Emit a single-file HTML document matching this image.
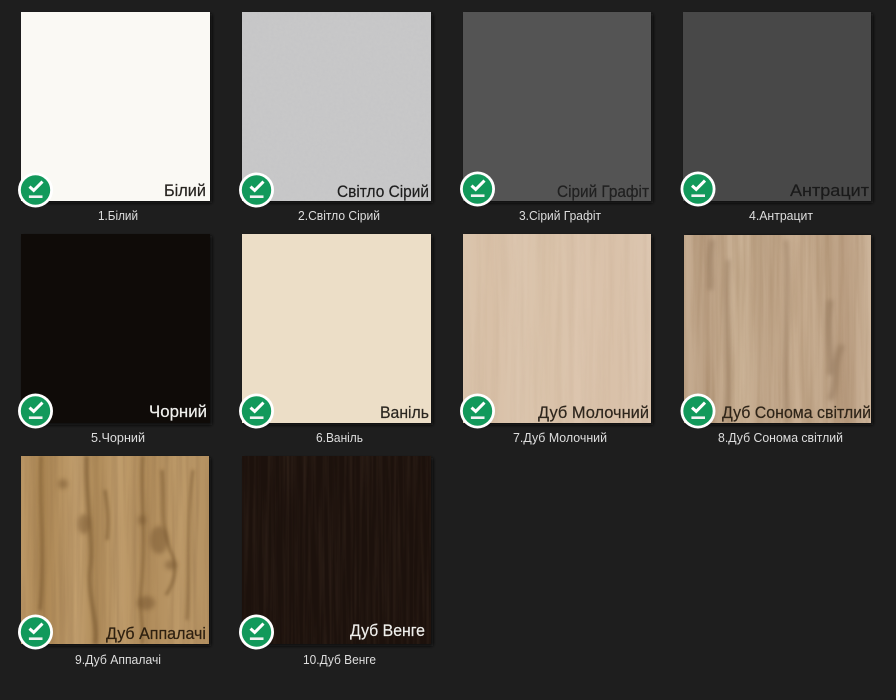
<!DOCTYPE html>
<html lang="uk">
<head>
<meta charset="utf-8">
<title>Кольори</title>
<style>
html,body{margin:0;padding:0;background:#1e1e1e;width:896px;height:700px;overflow:hidden}
svg{display:block}
text{font-family:"Liberation Sans","DejaVu Sans",sans-serif}
.c{font-size:12.5px;fill:#dedede}
.l{font-size:17px;stroke-width:.2px}
</style>
</head>
<body>
<svg width="896" height="700" viewBox="0 0 896 700" xmlns="http://www.w3.org/2000/svg">
<defs>
  <filter id="fine" x="0" y="0" width="100%" height="100%">
    <feTurbulence type="fractalNoise" baseFrequency="0.35" numOctaves="2" seed="3"/>
    <feColorMatrix values="0 0 0 0 0.5  0 0 0 0 0.5  0 0 0 0 0.5  0.5 0 0 0 -0.12"/>
  </filter>
  <filter id="grain" x="0" y="0" width="100%" height="100%">
    <feTurbulence type="fractalNoise" baseFrequency="0.16 0.006" numOctaves="3" seed="8"/>
    <feColorMatrix values="0 0 0 0 0.25  0 0 0 0 0.14  0 0 0 0 0.06  1.5 0 0 0 -0.55"/>
  </filter>
  <filter id="grainD" x="0" y="0" width="100%" height="100%">
    <feTurbulence type="fractalNoise" baseFrequency="0.3 0.008" numOctaves="2" seed="5"/>
    <feColorMatrix values="0 0 0 0 0.36  0 0 0 0 0.22  0 0 0 0 0.13  1.6 0 0 0 -0.62"/>
  </filter>
  <filter id="b1"><feGaussianBlur stdDeviation="1.6"/></filter>
  <filter id="b3"><feGaussianBlur stdDeviation="2.5"/></filter>
  <filter id="sh" x="-10%" y="-10%" width="120%" height="120%"><feGaussianBlur stdDeviation="1.5"/></filter>

  <linearGradient id="g7">
    <stop offset="0" stop-color="#dbc5ad"/><stop offset=".15" stop-color="#d8c0a7"/>
    <stop offset=".3" stop-color="#dcc6af"/><stop offset=".45" stop-color="#d9c2a9"/>
    <stop offset=".62" stop-color="#dcc5ae"/><stop offset=".8" stop-color="#d9c1a9"/>
    <stop offset="1" stop-color="#dcc6b0"/>
  </linearGradient>
  <linearGradient id="g8">
    <stop offset="0" stop-color="#c7ae93"/><stop offset=".12" stop-color="#bba084"/>
    <stop offset=".3" stop-color="#ccb498"/><stop offset=".42" stop-color="#c0a68a"/>
    <stop offset=".6" stop-color="#c8ae92"/><stop offset=".76" stop-color="#c3a98d"/>
    <stop offset=".86" stop-color="#bb9f83"/><stop offset="1" stop-color="#cdb59b"/>
  </linearGradient>
  <linearGradient id="g9">
    <stop offset="0" stop-color="#bd9967"/><stop offset=".12" stop-color="#ab8653"/>
    <stop offset=".3" stop-color="#c29f6e"/><stop offset=".4" stop-color="#ae8a58"/>
    <stop offset=".52" stop-color="#c09d6c"/><stop offset=".68" stop-color="#b08c5b"/>
    <stop offset=".85" stop-color="#bd9a69"/><stop offset="1" stop-color="#b49161"/>
  </linearGradient>

  <clipPath id="c8"><rect x="684" y="235" width="187" height="188"/></clipPath>
  <clipPath id="c9"><rect x="21" y="456" width="188" height="188"/></clipPath>

  <g id="badge">
    <circle r="17.5" fill="#fff"/>
    <circle r="14.7" fill="#12995b"/>
    <path d="M-6-3.4-1.8.4 7-8.4" fill="none" stroke="#fff" stroke-width="3"/>
    <rect x="-6.6" y="5.4" width="13.6" height="2.6" fill="#f2f2f2"/>
  </g>
</defs>

<rect width="896" height="700" fill="#1e1e1e"/>

<!-- soft shadows -->
<g fill="#111" filter="url(#sh)">
  <rect x="23" y="14" width="189" height="189"/><rect x="244" y="14" width="189" height="189"/>
  <rect x="465" y="14" width="188" height="189"/><rect x="685" y="14" width="188" height="189"/>
  <rect x="23" y="236" width="189" height="189"/><rect x="244" y="236" width="189" height="189"/>
  <rect x="465" y="236" width="188" height="189"/><rect x="686" y="236" width="187" height="189"/>
  <rect x="23" y="458" width="188" height="188"/><rect x="244" y="458" width="189" height="188"/>
</g>

<!-- row 1 -->
<rect x="21" y="12" width="189" height="189" fill="#faf9f4"/>
<rect x="242" y="12" width="189" height="189" fill="#c8c8c9"/>
<rect x="242" y="12" width="189" height="189" filter="url(#fine)" opacity=".55"/>
<rect x="463" y="12" width="188" height="189" fill="#545454"/>
<rect x="683" y="12" width="188" height="189" fill="#484848"/>

<!-- row 2 -->
<rect x="21" y="234" width="189" height="189" fill="#0f0b08"/>
<rect x="242" y="234" width="189" height="189" fill="#ecdec7"/>
<rect x="463" y="234" width="188" height="189" fill="url(#g7)"/>
<rect x="463" y="234" width="188" height="189" filter="url(#grain)" opacity=".1"/>
<rect x="684" y="235" width="187" height="188" fill="url(#g8)"/>
<rect x="684" y="235" width="187" height="188" filter="url(#grain)" opacity=".35"/>
<g clip-path="url(#c8)" fill="none" stroke="#8f7358" opacity=".55" filter="url(#b3)">
  <path d="M712 240C708 265 712 280 710 290" stroke-width="5"/>
  <path d="M830 300C826 330 832 350 830 375" stroke-width="6"/>
  <path d="M842 345C832 365 838 385 830 400" stroke-width="6"/>
  <path d="M728 260C724 320 732 370 726 420" stroke-width="4"/>
  <path d="M786 240C790 300 782 360 788 423" stroke-width="4"/>
</g>

<!-- row 3 -->
<rect x="21" y="456" width="188" height="188" fill="url(#g9)"/>
<rect x="21" y="456" width="188" height="188" filter="url(#grain)" opacity=".4"/>
<g clip-path="url(#c9)" fill="none" stroke="#6d4e28" opacity=".55" filter="url(#b1)">
  <path d="M41 456C39 500 45 560 40 610" stroke-width="3"/>
  <path d="M87 456C85 490 94 540 90 570C88 600 98 620 95 644" stroke-width="4"/>
  <path d="M105 490C108 510 109 520 107 540" stroke-width="3"/>
  <path d="M143 456C140 490 147 530 141 590C139 610 144 630 142 644" stroke-width="3"/>
  <path d="M162 470C165 510 160 520 170 550C178 565 176 580 166 595" stroke-width="3"/>
  <path d="M193 470C186 520 190 570 187 620" stroke-width="2.5"/>
</g>
<g fill="#6f4f2a" opacity=".45" filter="url(#b3)">
  <ellipse cx="84" cy="524" rx="6" ry="10"/><ellipse cx="159" cy="540" rx="9" ry="14"/>
  <ellipse cx="171" cy="565" rx="6" ry="5"/><ellipse cx="146" cy="603" rx="9" ry="7"/>
  <ellipse cx="63" cy="484" rx="5" ry="5"/><ellipse cx="142" cy="520" rx="4" ry="5"/>
</g>
<rect x="242" y="456" width="189" height="188" fill="#1c110c"/>
<rect x="242" y="456" width="189" height="188" filter="url(#grainD)" opacity=".14"/>

<!-- image labels -->
<text class="l" x="164" y="196" textLength="42" lengthAdjust="spacingAndGlyphs" fill="#26231f" stroke="#26231f">Білий</text>
<text class="l" x="337" y="197" textLength="92" lengthAdjust="spacingAndGlyphs" fill="#1d1d1d" stroke="#1d1d1d">Світло Сірий</text>
<text class="l" x="557" y="197" textLength="92" lengthAdjust="spacingAndGlyphs" fill="#202020" stroke="#202020">Сірий Графіт</text>
<text class="l" x="790" y="196" textLength="79" lengthAdjust="spacingAndGlyphs" fill="#1a1a1a" stroke="#1a1a1a">Антрацит</text>
<text class="l" x="149" y="417" textLength="58" lengthAdjust="spacingAndGlyphs" fill="#f1f1ee" stroke="#f1f1ee">Чорний</text>
<text class="l" x="380" y="418" textLength="49" lengthAdjust="spacingAndGlyphs" fill="#2a2620" stroke="#2a2620">Ваніль</text>
<text class="l" x="538" y="418" textLength="111" lengthAdjust="spacingAndGlyphs" fill="#2e261d" stroke="#2e261d">Дуб Молочний</text>
<text class="l" x="722" y="418" textLength="149" lengthAdjust="spacingAndGlyphs" fill="#2e2418" stroke="#2e2418">Дуб Сонома світлий</text>
<text class="l" x="106" y="639" textLength="100" lengthAdjust="spacingAndGlyphs" fill="#2e2010" stroke="#2e2010">Дуб Аппалачі</text>
<text class="l" x="350" y="636" textLength="75" lengthAdjust="spacingAndGlyphs" fill="#efefec" stroke="#efefec">Дуб Венге</text>

<!-- badges -->
<use href="#badge" x="35.5" y="190"/>
<use href="#badge" x="256.5" y="190"/>
<use href="#badge" x="477.5" y="189"/>
<use href="#badge" x="698" y="189"/>
<use href="#badge" x="35.5" y="411"/>
<use href="#badge" x="256.5" y="411"/>
<use href="#badge" x="477.5" y="411"/>
<use href="#badge" x="698" y="411"/>
<use href="#badge" x="35.5" y="632"/>
<use href="#badge" x="256.5" y="632"/>

<!-- captions -->
<text class="c" x="98" y="220" textLength="40" lengthAdjust="spacingAndGlyphs">1.Білий</text>
<text class="c" x="298" y="220" textLength="82" lengthAdjust="spacingAndGlyphs">2.Світло Сірий</text>
<text class="c" x="519" y="220" textLength="82" lengthAdjust="spacingAndGlyphs">3.Сірий Графіт</text>
<text class="c" x="749" y="220" textLength="64" lengthAdjust="spacingAndGlyphs">4.Антрацит</text>
<text class="c" x="91" y="442" textLength="54" lengthAdjust="spacingAndGlyphs">5.Чорний</text>
<text class="c" x="316" y="442" textLength="47" lengthAdjust="spacingAndGlyphs">6.Ваніль</text>
<text class="c" x="513" y="442" textLength="94" lengthAdjust="spacingAndGlyphs">7.Дуб Молочний</text>
<text class="c" x="718" y="442" textLength="125" lengthAdjust="spacingAndGlyphs">8.Дуб Сонома світлий</text>
<text class="c" x="75" y="664" textLength="86" lengthAdjust="spacingAndGlyphs">9.Дуб Аппалачі</text>
<text class="c" x="303" y="664" textLength="73" lengthAdjust="spacingAndGlyphs">10.Дуб Венге</text>
</svg>
</body>
</html>
